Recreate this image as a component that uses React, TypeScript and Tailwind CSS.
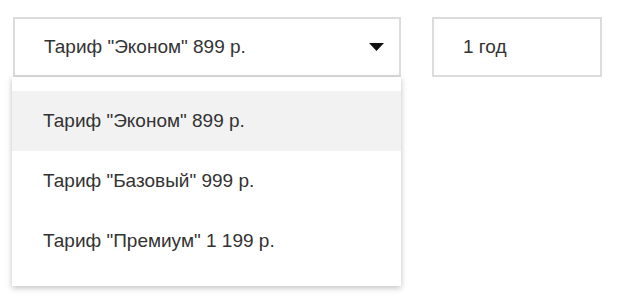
import React, { useState } from "react";

const tariffs = [
  'Тариф "Эконом" 899 р.',
  'Тариф "Базовый" 999 р.',
  'Тариф "Премиум" 1 199 р.',
];

export default function App() {
  const [selected, setSelected] = useState(0);
  const [open, setOpen] = useState(true);

  return (
    <div
      className="min-h-screen bg-white pl-[13px] pt-[17px] text-[19px] text-[#333]"
      style={{ fontFamily: '"Liberation Sans", Arial, sans-serif' }}
    >
      <div className="flex items-start gap-[31px]">
        <div className="relative w-[388px]">
          <button
            onClick={() => setOpen(!open)}
            className="flex h-[60px] w-full items-center justify-between border-2 border-[#dcdcdc] pl-[29px] pr-[14px] text-left"
          >
            <span>{tariffs[selected]}</span>
            <svg width="15" height="8" viewBox="0 0 15 8" className="mr-[1px]">
              <path d="M0 0 H15 L7.5 8 Z" fill="#111" />
            </svg>
          </button>
          {open && (
            <div className="absolute left-[-1px] top-[60px] w-[389px] bg-white pt-[14px] pb-[15px] shadow-[0_2px_6px_rgba(0,0,0,0.25)]">
              {tariffs.map((t, i) => (
                <div
                  key={t}
                  onClick={() => {
                    setSelected(i);
                    setOpen(false);
                  }}
                  className={`flex h-[60px] items-center pl-[31px] ${
                    i === selected ? "bg-[#f2f2f2]" : ""
                  }`}
                >
                  {t}
                </div>
              ))}
            </div>
          )}
        </div>
        <div className="flex h-[60px] w-[170px] items-center border-2 border-[#dcdcdc] pl-[29px]">
          1 год
        </div>
      </div>
    </div>
  );
}
